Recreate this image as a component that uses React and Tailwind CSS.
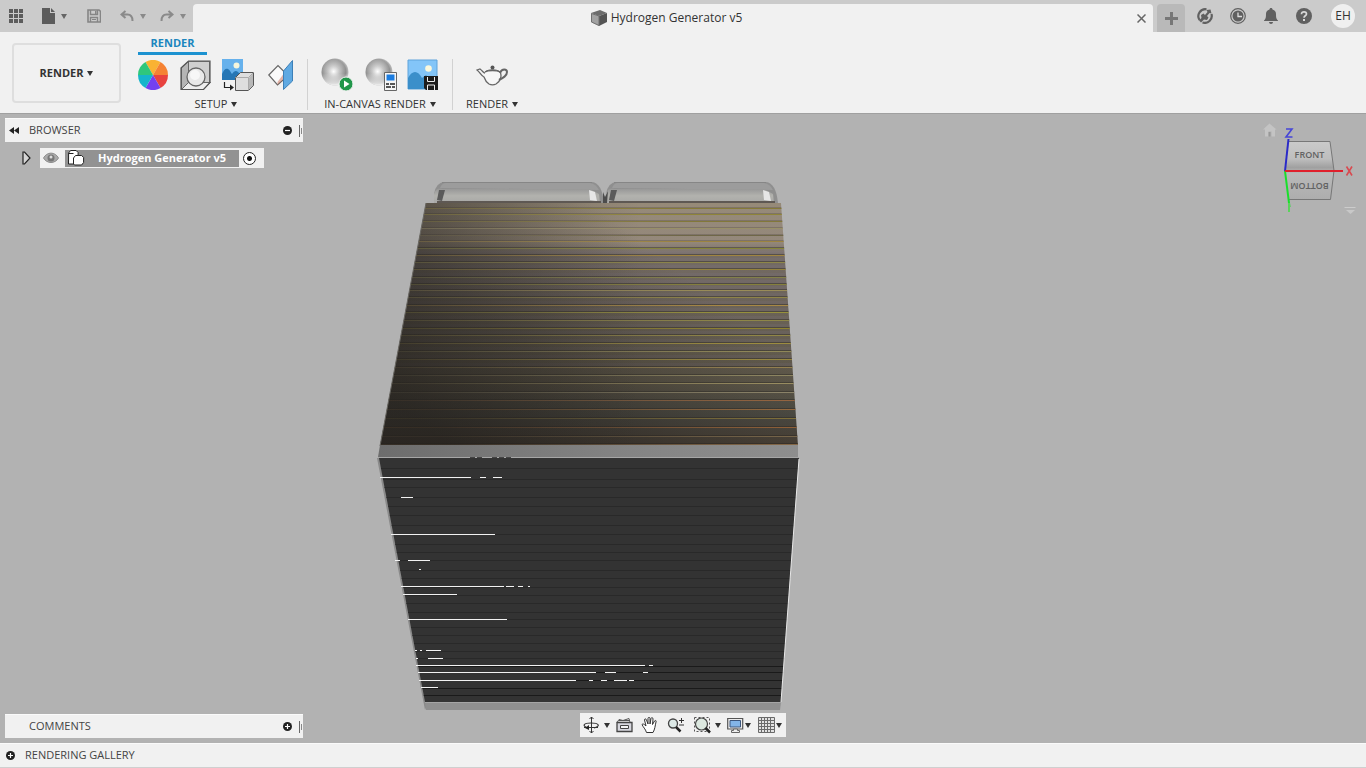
import { useState } from 'react';

const TOP_GROOVES = [
  [208, '#857a38'], [214, '#8e8438'], [221, '#82783a'], [228, '#989068'], [235, '#6f6748'],
  [241, '#9c8440'], [248, '#85853a'], [255, '#a08440'], [262, '#8e8748'], [269, '#94823c'],
  [277, '#82804a'], [284, '#85803c'], [290, '#998c58'], [297, '#8e8448'], [305, '#a88844'],
  [312, '#96903c'], [320, '#8e8648'], [328, '#8f8230'], [335, '#918646'], [343, '#9c8c40'],
  [351, '#8f8758'], [359, '#968640'], [367, '#937f50'], [375, '#8c8460'], [383, '#988c60'],
  [392, '#8a8268'], [400, '#946440'], [409, '#94683e'], [418, '#80703a'], [427, '#906038'],
  [436, '#78664a'], [444, '#886a48'],
];

const FRONT_GROOVES = [
  468, 479, 487, 497, 506, 515, 525, 534, 544, 552, 560, 570, 578, 587, 595, 603, 612, 619, 627, 635, 643, 651, 658,
  666, 672, 680, 688, 695,
];

// x1, x2, y
const GLINTS = [
  [380, 471, 477], [480, 486, 477], [493, 502, 477], [401, 413, 497], [391, 495, 534],
  [395, 400, 560], [408, 430, 560], [419, 421, 569], [401, 504, 586], [506, 514, 586], [518, 523, 586],
  [528, 530, 586], [403, 457, 594], [408, 507, 619], [415, 417, 650], [420, 422, 650], [426, 441, 650],
  [416, 418, 658], [428, 443, 658], [416, 645, 665], [649, 653, 665], [418, 596, 672], [605, 616, 672],
  [643, 648, 672], [419, 576, 680], [589, 593, 680], [601, 607, 680], [614, 627, 680], [629, 634, 680],
  [421, 438, 687],
];

const Caret = ({ className = 'text-[#333]' }) => (
  <svg width="6" height="5" viewBox="0 0 6 5" fill="currentColor" className={className} aria-hidden="true">
    <path d="M0 0h6L3 5z" />
  </svg>
);

const Icon = ({ w, h, children, className }) => (
  <svg width={w} height={h} viewBox={`0 0 ${w} ${h}`} fill="none" className={className} aria-hidden="true">
    {children}
  </svg>
);

const TopButton = ({ label, className = '', children }) => (
  <button type="button" aria-label={label} className={`flex h-8 items-center justify-center ${className}`}>
    {children}
  </button>
);

const PlusDot = ({ minus }) => (
  <Icon w={9} h={9}>
    <circle cx="4.5" cy="4.5" r="4.5" fill="#222" />
    <path d={minus ? 'M2 4.5h5' : 'M2 4.5h5M4.5 2v5'} stroke="#fff" strokeWidth="1.2" />
  </Icon>
);

const Grip = () => (
  <Icon w={4} h={12}>
    <path d="M0.5 0v12" stroke="#666" />
    <path d="M2.5 3v6" stroke="#888" />
  </Icon>
);

const TopBar = () => (
  <div className="flex h-8 bg-[#cbcbcb] text-[#5f5f5f]">
    <div className="flex w-[193px] shrink-0 items-center pl-2">
      <TopButton label="Data panel" className="w-4">
        <Icon w={14} h={14}>
          {[0, 5, 10].map((y) => [0, 5, 10].map((x) => (
            <rect key={`${x}-${y}`} x={x} y={y} width="4" height="4" fill="#5c5c5c" />
          )))}
        </Icon>
      </TopButton>
      <TopButton label="File" className="ml-4 w-7 gap-1.5">
        <Icon w={14} h={16}>
          <path d="M1 0h8v5h5v11H1z" fill="#5c5c5c" />
          <path d="M10 0l4 4h-4z" fill="#5c5c5c" />
        </Icon>
        <Caret className="text-[#666]" />
      </TopButton>
      <TopButton label="Save" className="ml-[18px] w-4">
        <Icon w={14} h={14}>
          <path d="M1 1h11l1.500 1.500V13H1z" stroke="#858585" strokeWidth="1.600" />
          <path d="M3.500 1v4.500h7V1M3.500 13V8.500h7V13" stroke="#858585" strokeWidth="1.400" />
          <path d="M8 2h1.500v3H8zM5 10h4v1H5z" fill="#858585" />
        </Icon>
      </TopButton>
      <TopButton label="Undo" className="ml-[18px] w-[26px] gap-1.5">
        <Icon w={14} h={14}>
          <path d="M5.500 2L1.500 5.500l4 3.500M1.500 5.500h6c3.500 0 5 2 5 6.500" stroke="#8a8a8a" strokeWidth="2" />
        </Icon>
        <Caret className="text-[#8a8a8a]" />
      </TopButton>
      <TopButton label="Redo" className="ml-3.5 w-[26px] gap-1.5">
        <Icon w={14} h={14}>
          <path d="M8.500 2l4 3.500-4 3.500M12.500 5.500h-6c-3.500 0-5 2-5 6.500" stroke="#8a8a8a" strokeWidth="2" />
        </Icon>
        <Caret className="text-[#8a8a8a]" />
      </TopButton>
    </div>

    <div className="mt-1 flex flex-1 items-center rounded-t-sm bg-[#f1f1f1] pr-1">
      <div className="flex flex-1 items-center justify-center gap-1 pl-1.5 text-[12px] text-[#333]">
        <Icon w={16} h={16}>
          <path d="M0 3L9 0l7 3-8 3z" fill="#6c6c6c" />
          <path d="M0 3l8 3v10l-8-4z" fill="#a2a2a2" />
          <path d="M8 6l8-3v9l-8 4z" fill="#545454" />
          <path d="M0.500 3.500L8 6v9.500L0.500 12z" stroke="#707070" />
        </Icon>
        <h1>Hydrogen Generator v5</h1>
      </div>
      <button type="button" aria-label="Close tab" className="p-[3px]">
        <Icon w={9} h={9}>
          <path d="M0.500 0.500l8 8M8.500 0.500l-8 8" stroke="#666" strokeWidth="1.500" />
        </Icon>
      </button>
    </div>

    <button type="button" aria-label="New design" className="mt-1 ml-1 flex w-7 items-center justify-center rounded-t-sm bg-[#b9b9b9]">
      <Icon w={13} h={13}>
        <path d="M0 6.500h13M6.500 0v13" stroke="#777" strokeWidth="3" />
      </Icon>
    </button>

    <div className="flex w-[181px] shrink-0 items-center pl-[3px]">
      <TopButton label="Extensions" className="w-[33px]">
        <Icon w={16} h={16}>
          <path d="M9.500 1.300A7 7 0 0 0 2.500 12M5.500 14.500A7 7 0 0 0 14.500 6" stroke="#606060" strokeWidth="2.200" />
          <path d="M2 12.500l2.500-2.500L4 7l2.500-1.500L8 7l2.500-3L9.500 2l4-.5 1 4-2-.5L10 8l1.500 1.500L10 12l-3-.5-3 3z" fill="#606060" />
        </Icon>
      </TopButton>
      <TopButton label="Job status" className="w-[33px]">
        <Icon w={16} h={16}>
          <circle cx="8" cy="8" r="7.300" stroke="#606060" strokeWidth="1.200" />
          <circle cx="8" cy="8" r="5.500" fill="#606060" />
          <path d="M8 4.500V8.500h4" stroke="#ddd" strokeWidth="1.300" />
        </Icon>
      </TopButton>
      <TopButton label="Notifications" className="w-[33px]">
        <Icon w={14} h={16}>
          <path d="M7 0c1 0 1.500.6 1.500 1.500C11 2 12 4 12 6c0 4 .5 5 2 6.500V13H0v-.5C1.500 11 2 10 2 6c0-2 1-4 3.500-4.500C5.500.6 6 0 7 0zM5 14h4c0 1.200-1 2-2 2s-2-.8-2-2z" fill="#606060" />
        </Icon>
      </TopButton>
      <TopButton label="Help" className="w-[33px]">
        <Icon w={16} h={16}>
          <circle cx="8" cy="8" r="8" fill="#606060" />
          <path d="M5.500 6.300C5.500 4.500 6.500 3.800 8 3.800s2.500.8 2.500 2.200c0 1.800-2.500 1.800-2.500 3.700" stroke="#d8d8d8" strokeWidth="1.700" />
          <path d="M7 11h2v2H7z" fill="#d8d8d8" />
        </Icon>
      </TopButton>
      <button type="button" aria-label="Account EH" className="ml-[11px] size-6 rounded-full bg-[#efefef] text-[12px] leading-6 text-[#333]">
        EH
      </button>
    </div>
  </div>
);

const ToolGroup = ({ label, children }) => (
  <div className="flex flex-col items-center">
    <div className="flex h-9 items-center">{children}</div>
    <button type="button" className="mt-[3px] flex items-center gap-1 text-[11px] leading-4 text-[#333]">
      {label}
      <Caret />
    </button>
  </div>
);

const Tool = ({ label, className = '', children }) => (
  <button type="button" aria-label={label} className={className}>
    {children}
  </button>
);

const Separator = () => <div className="mx-[13px] mt-0.5 h-[51px] w-px bg-[#d2d2d2]" />;

const Sphere = () => (
  <>
    <defs>
      <radialGradient id="sphere" cx="0.450" cy="0.480" r="0.600">
        <stop offset="0" stopColor="#fff" />
        <stop offset="0.350" stopColor="#c4c4c4" />
        <stop offset="0.750" stopColor="#8b8b8b" />
        <stop offset="1" stopColor="#d5d5d5" />
      </radialGradient>
      <linearGradient id="shine" x1="0" y1="0" x2="0" y2="1">
        <stop offset="0" stopColor="#fff" stopOpacity="0.200" />
        <stop offset="0.550" stopColor="#fff" stopOpacity="0" />
        <stop offset="1" stopColor="#fff" stopOpacity="0.850" />
      </linearGradient>
    </defs>
    <circle cx="14" cy="14" r="13.500" fill="url(#sphere)" />
    <circle cx="14" cy="14" r="13.500" fill="url(#shine)" />
  </>
);

const Toolbar = () => (
  <div className="flex h-[82px] border-b border-[#a0a0a0] bg-[#f1f1f1] pl-3">
    <button
      type="button"
      className="mt-[11px] flex h-[60px] w-[109px] items-center justify-center gap-1 rounded border-2 border-[#dedede] text-[11px] font-bold text-[#333]"
    >
      RENDER
      <Caret />
    </button>
    <div className="ml-[17px]">
      <button type="button" className="block h-[23px] w-[69px] border-b-[3px] border-[#1c92d0] text-[11px] leading-[22px] font-bold text-[#1c86be]">
        RENDER
      </button>
      <div className="mt-0.5 flex">
        <ToolGroup label="SETUP">
          <Tool label="Appearance">
            <Icon w={30} h={30}>
              <path d="M15 15L7.500 2A15 15 0 0 1 22.500 2z" fill="#f9b233" />
              <path d="M15 15L22.500 2A15 15 0 0 1 30 15z" fill="#f58233" />
              <path d="M15 15H30A15 15 0 0 1 22.500 28z" fill="#e8423f" />
              <path d="M15 15L22.500 28A15 15 0 0 1 7.500 28z" fill="#7440f0" />
              <path d="M15 15L7.500 28A15 15 0 0 1 0 15z" fill="#16b5cb" />
              <path d="M15 15H0A15 15 0 0 1 7.500 2z" fill="#2fc77b" />
            </Icon>
          </Tool>
          <Tool label="Scene settings" className="ml-3">
            <Icon w={32} h={30}>
              <path d="M8.500 1.500h21v21h-21z" fill="#cfcfcf" stroke="#777" />
              <path d="M1.500 7.500l7-6v21l-7 7z" fill="#b5b5b5" stroke="#666" />
              <path d="M1.500 29.500l7-7h22l-7 7z" fill="#eee" stroke="#666" />
              <path d="M1 8l7.500-7H30v21.500L23.500 29.500H1z" stroke="#555" strokeWidth="1.200" />
              <circle cx="16" cy="17" r="9" fill="#e9e9e9" stroke="#666" strokeWidth="1.300" />
              <circle cx="15" cy="15" r="5" fill="#f7f7f7" />
            </Icon>
          </Tool>
          <Tool label="Decal" className="ml-2.5">
            <Icon w={32} h={34}>
              <path d="M0 1h21v21H0z" fill="#66b1ec" />
              <path d="M0 16c2-5 4-6 6-5 2 1 3 4 4 5 2-3 4-4 6-2l5 5v3H0z" fill="#2576b5" />
              <circle cx="14.500" cy="7.500" r="3" fill="#f6f6dc" />
              <path d="M13.500 19.500l5-5h13v13l-5 5h-13z" fill="#dedede" stroke="#555" />
              <path d="M13.500 19.500h13v13M26.500 19.500l5-5" stroke="#aaa" />
              <path d="M27 20l4-4.500v12l-4 4z" fill="#b8b8b8" />
              <path d="M2.500 24v5.500H11" stroke="#222" strokeWidth="1.200" />
              <path d="M8 26.500l4 3-4 3z" fill="#222" />
            </Icon>
          </Tool>
          <Tool label="Texture map controls" className="ml-3.5">
            <Icon w={26} h={30}>
              <path d="M0.800 15L10 5.500l8 8v4L9.500 25z" fill="#fafafa" stroke="#666" strokeWidth="1.200" />
              <path d="M9.500 25l6-6v-5l-6 8z" fill="#c96d55" opacity="0.500" />
              <path d="M15.500 11L24.500 0.500v20.500l-9 8.500z" fill="#5fa9e2" stroke="#3d80b8" />
            </Icon>
          </Tool>
        </ToolGroup>
        <Separator />
        <ToolGroup label="IN-CANVAS RENDER">
          <Tool label="In-canvas render">
            <Icon w={32} h={34}>
              <Sphere />
              <circle cx="25" cy="26" r="7" fill="#21964a" stroke="#f1f1f1" />
              <path d="M23 22.500l5.500 3.500-5.500 3.500z" fill="#fff" />
            </Icon>
          </Tool>
          <Tool label="In-canvas render settings" className="ml-3">
            <Icon w={32} h={34}>
              <Sphere />
              <path d="M19.500 14.500h12v18h-12z" fill="#f5f5f5" stroke="#666" />
              <path d="M21.500 16.500h8v6h-8z" fill="#1b7ce0" />
              <path d="M21 26h3M25 26h5M21 29h5M27 29h3" stroke="#222" strokeWidth="1.400" />
            </Icon>
          </Tool>
          <Tool label="Capture image" className="ml-2.5">
            <Icon w={32} h={32}>
              <path d="M1 1h29v29H1z" fill="#83c5f8" />
              <path d="M1 1h29v29H1z" stroke="#5fa3da" />
              <path d="M1 19c4-8 10-8 14 0l4-3 4 4v10H1z" fill="#3b8fca" />
              <circle cx="21.500" cy="9.500" r="3.300" fill="#faf8dd" />
              <path d="M17 17h14v14H19l-2-2z" fill="#1d1d1d" />
              <path d="M20.500 18v4.500h7V18M20.500 31v-5h7v5" stroke="#eee" />
            </Icon>
          </Tool>
        </ToolGroup>
        <Separator />
        <ToolGroup label="RENDER">
          <Tool label="Render">
            <Icon w={32} h={24}>
              <path d="M9 9c3-2 12-2 15 0 2 3 1 9-4 12-2 1-5 1-7 0-3-2-4-4-5-7C5 13 4 9 1 7l3-1c3 2 3 4 5 4" fill="#f7f7f7" stroke="#666" strokeWidth="1.300" />
              <path d="M9 9c3-3 12-3 15 0" stroke="#666" />
              <path d="M24 10c2-5 7-4 7-1 0 4-4 6-8 8" stroke="#666" strokeWidth="2" />
              <circle cx="16.500" cy="4.500" r="2" fill="#555" />
            </Icon>
          </Tool>
        </ToolGroup>
      </div>
    </div>
  </div>
);

const PanelHeader = ({ title, open, onToggle, collapse }) => (
  <div className="flex h-6 w-[298px] items-center border-t border-[#fafafa] bg-[#f1f1f1] pl-1 text-[11px] text-[#444]">
    <div className="w-5">
      {collapse ? (
        <button type="button" aria-label="Collapse panel" className="flex">
          <Icon w={10} h={7}>
            <path d="M5 0v7L0 3.500zM10 0v7L5 3.500z" fill="#222" />
          </Icon>
        </button>
      ) : null}
    </div>
    <h2 className="flex-1">{title}</h2>
    <button type="button" aria-label={`Toggle ${title}`} onClick={onToggle} className="mr-[7px]">
      <PlusDot minus={open} />
    </button>
    <Grip />
  </div>
);

const Browser = () => {
  const [open, setOpen] = useState(true);

  return (
    <section>
      <PanelHeader title="BROWSER" open={open} onToggle={() => setOpen(!open)} collapse />
      {open ? (
        <div className="mt-1.5 flex h-5 items-center pl-[17px]">
          <button type="button" aria-label="Expand component" className="w-[18px]">
            <Icon w={9} h={14}>
              <path d="M1 1h1.500l5.500 6-5.500 6H1z" fill="#d5d5d5" stroke="#222" strokeWidth="1.200" />
            </Icon>
          </button>
          <div className="flex h-5 w-56 items-center bg-[#f1f1f1] pl-[3px]">
            <button type="button" aria-label="Show or hide">
              <Icon w={16} h={12}>
                <path d="M0.500 6C4-0.500 12-0.500 15.500 6 12 12 4 12 0.500 6z" fill="#aaa" stroke="#8c8c8c" />
                <circle cx="8" cy="6" r="3.500" fill="#777" />
                <circle cx="8" cy="5" r="1.500" fill="#ddd" />
              </Icon>
            </button>
            <div className="ml-1.5 flex h-[17px] flex-1 items-center bg-[#929292] pl-[3px]">
              <Icon w={17} h={16}>
                <path d="M0.600 3l2-2.500h5.500l2 2v3h3.500l2 2v5l-2 2.500H6.500l-1-1h-5z" fill="#fff" stroke="#222" />
                <path d="M5.500 14V8l2-2.500H10M1 3.500h4.500" stroke="#222" />
              </Icon>
              <span className="ml-[13px] text-[11px] font-bold whitespace-nowrap text-white">Hydrogen Generator v5</span>
            </div>
            <label className="flex w-[25px] justify-center pr-1">
              <input
                type="radio"
                name="active"
                defaultChecked
                aria-label="Activate component"
                className="size-[13px] appearance-none rounded-full border border-[#222] bg-[radial-gradient(circle,#111_0_2px,#fff_3px)]"
              />
            </label>
          </div>
        </div>
      ) : null}
    </section>
  );
};

const ViewCube = () => (
  <svg width="100" height="100" viewBox="1260 118 100 100" fill="none" className="mr-px shrink-0" role="img" aria-label="View cube">
    <defs>
      <linearGradient id="cube" x1="0" y1="0" x2="0" y2="1">
        <stop offset="0" stopColor="#cacaca" />
        <stop offset="0.300" stopColor="#bebebe" />
        <stop offset="0.450" stopColor="#a0a0a0" />
        <stop offset="0.550" stopColor="#b9b9b9" />
        <stop offset="1" stopColor="#adadad" />
      </linearGradient>
    </defs>
    <path d="M1263 129.500l6.500-6 7 6h-1.500v7h-3.500v-5h-3v5h-3.500v-7z" fill="#c4c4c4" />
    <path d="M1268.500 132h2v4.500h-2z" fill="#989898" />
    <path d="M1289 141.500h41l4 29-3.500 29H1289l-4-28z" fill="url(#cube)" />
    <path d="M1289 141.500h41l4 29-3.500 29H1289" stroke="#777" />
    <text x="1309.500" y="158" textAnchor="middle" fontSize="9" fontWeight="600" fill="#626262">FRONT</text>
    <text x="1309.500" y="189" textAnchor="middle" fontSize="9" fontWeight="600" fill="#626262" transform="rotate(180 1309.500 186)">BOTTOM</text>
    <path d="M1288.500 139l-3.500 32" stroke="#2a2ac8" strokeWidth="2" />
    <path d="M1285 171l4.500 36" stroke="#18e02a" strokeWidth="2" />
    <path d="M1289 203v9" stroke="#5ad35a" strokeWidth="2" />
    <path d="M1285 171h58" stroke="#e0202c" strokeWidth="2" />
    <path d="M1286 129h6l-6 8h6.500" stroke="#4646d8" strokeWidth="1.600" />
    <path d="M1346.500 166.500l5.500 9M1352 166.500l-5.500 9" stroke="#d84a50" strokeWidth="1.600" />
    <path d="M1344.500 207.500h11" stroke="#ccc" />
    <path d="M1346 210h9l-4.500 4z" fill="#c8c8c8" />
  </svg>
);

// rounded tank seen above the back edge of the stack
const Tank = ({ x, w }) => (
  <g transform={`translate(${x} 0)`}>
    <path d={`M0 203V194Q2 182 11 182H${w - 12}Q${w - 2} 183 ${w} 203z`} fill="#8f8f8f" />
    <path d={`M6 188Q8 183 12 183H${w - 14}Q${w - 8} 184 ${w - 5} 190z`} fill="#9c9c9c" />
    <path d={`M0 201V194Q2 187 9 189H${w - 14}L${w - 5} 194 ${w - 4} 203H0z`} fill="url(#tank)" />
    <path d="M3 200l2-10h6l-3 11z" fill="#5a5a5a" />
    <path d={`M${w - 15} 190l6 2 2 9-7-1z`} fill="#e6e6e6" />
    <path d={`M3 202h${w - 6}`} stroke="#5e5853" strokeWidth="2" />
    <path d={`M8 182.500h${w - 20}`} stroke="#868686" />
  </g>
);

const Model = () => (
  <svg
    width="440"
    height="540"
    viewBox="370 175 440 540"
    fill="none"
    className="absolute top-[61px] left-[370px]"
    role="img"
    aria-label="Hydrogen Generator model"
  >
    <defs>
      <linearGradient id="tank" x1="0" y1="0" x2="0" y2="1">
        <stop offset="0" stopColor="#969696" />
        <stop offset="0.500" stopColor="#b2b2ae" />
        <stop offset="1" stopColor="#a8a8a6" />
      </linearGradient>
      <linearGradient id="topFace" gradientUnits="userSpaceOnUse" x1="0" y1="203" x2="0" y2="445">
        <stop offset="0" stopColor="#968a78" />
        <stop offset="0.160" stopColor="#94887b" />
        <stop offset="0.220" stopColor="#746b64" />
        <stop offset="0.500" stopColor="#686054" />
        <stop offset="0.750" stopColor="#5c5648" />
        <stop offset="0.880" stopColor="#4c4b44" />
        <stop offset="1" stopColor="#4c4237" />
      </linearGradient>
      <linearGradient id="topShade" gradientUnits="userSpaceOnUse" x1="430" y1="430" x2="600" y2="210">
        <stop offset="0" stopColor="#1e1b19" stopOpacity="0.720" />
        <stop offset="0.450" stopColor="#24211e" stopOpacity="0.420" />
        <stop offset="1" stopColor="#302c24" stopOpacity="0" />
      </linearGradient>
      <linearGradient id="sideShade" gradientUnits="userSpaceOnUse" x1="400" y1="0" x2="640" y2="0">
        <stop offset="0" stopColor="#2a2722" stopOpacity="0.420" />
        <stop offset="1" stopColor="#2a2722" stopOpacity="0" />
      </linearGradient>
      <linearGradient id="grooveFade" gradientUnits="userSpaceOnUse" x1="400" y1="360" x2="660" y2="200">
        <stop offset="0" stopColor="#fff" stopOpacity="0.120" />
        <stop offset="0.450" stopColor="#fff" stopOpacity="0.450" />
        <stop offset="1" stopColor="#fff" />
      </linearGradient>
      <mask id="grooves" maskUnits="userSpaceOnUse" x="370" y="175" width="440" height="290">
        <path d="M370 175h440v290H370z" fill="url(#grooveFade)" />
      </mask>
      <clipPath id="topClip">
        <path d="M426 203H781L798 446H380z" />
      </clipPath>
      <clipPath id="frontClip">
        <path d="M379 458H799L781 702H425z" />
      </clipPath>
      <linearGradient id="lip" x1="0" y1="0" x2="1" y2="0">
        <stop offset="0" stopColor="#6d6d6d" />
        <stop offset="0.600" stopColor="#848484" />
        <stop offset="1" stopColor="#8e8e8e" />
      </linearGradient>
    </defs>

    <Tank x={434} w={170} />
    <Tank x={606} w={172} />
    <path d="M603 203v-11l2 5 3-6-1 12z" fill="#4c4c4c" />

    <g clipPath="url(#topClip)">
      <path d="M370 200h440v250H370z" fill="url(#topFace)" />
      <g shapeRendering="crispEdges">
        {TOP_GROOVES.map(([y]) => (
          <path key={y} d={`M370 ${y - 1}.5h440`} stroke="#221f1c" strokeOpacity={y < 245 ? '0.200' : '0.380'} />
        ))}
        {TOP_GROOVES.filter(([y]) => y > 250 && y < 370).map(([y]) => (
          <path key={y} d={`M370 ${y - 3}.5h440`} stroke="#8a7db0" strokeOpacity="0.100" strokeWidth="3" />
        ))}
      </g>
      <path d="M370 200h440v250H370z" fill="url(#topShade)" />
      <path d="M370 200h440v250H370z" fill="url(#sideShade)" />
      <g shapeRendering="crispEdges" mask="url(#grooves)">
        {TOP_GROOVES.map(([y, color]) => (
          <path key={y} d={`M370 ${y}.5h440`} stroke={color} />
        ))}
      </g>
    </g>
    <path d="M426 203L380 446" stroke="#6a6863" />

    <path d="M380 445H798V457H378z" fill="url(#lip)" />
    <path d="M378 457.500H799" stroke="#a6a6a6" />
    <path d="M377 458h4l47 244-3 8z" fill="#8a8a8a" />
    <g clipPath="url(#frontClip)" shapeRendering="crispEdges">
      <path d="M370 458h440v250H370z" fill="#333" />
      {FRONT_GROOVES.map((y) => (
        <path key={y} d={`M370 ${y}.5h440`} stroke={y > 660 ? '#1a1a1a' : '#292929'} />
      ))}
    </g>
    <path d="M799 459L781 702" stroke="#e8e8e8" />
    <path d="M425 702H781L780 710H426z" fill="#8f8f8f" />
    <path d="M425 702.500H781" stroke="#a5a5a5" />
    <path d="M470 457.500h14M492 457.500h20" stroke="#444" strokeDasharray="5 2" />
    <g shapeRendering="crispEdges" stroke="#f2f2f2">
      {GLINTS.map(([x1, x2, y]) => (
        <path key={`${x1}-${y}`} d={`M${x1} ${y}.5H${x2}`} />
      ))}
    </g>
  </svg>
);

const NavBar = () => (
  <div className="mb-px flex h-6 w-[206px] items-center bg-[#f1f1f1] pl-[3px]">
    <button type="button" aria-label="Orbit" className="flex items-center gap-1">
      <Icon w={17} h={18}>
        <path d="M8.500 1v16M6.500 3l2-2 2 2M6.500 15l2 2 2-2" stroke="#333" />
        <path d="M5 12C-1 10 0 7 8 7s10 3 3 5M1 11.500h14" stroke="#333" strokeWidth="1.200" />
        <path d="M6 9l-4 3 4 2z" fill="#222" />
      </Icon>
      <Caret />
    </button>
    <button type="button" aria-label="Look at" className="ml-1.5">
      <Icon w={17} h={16}>
        <path d="M1 5.500h15v9H1z" fill="#d8d8df" stroke="#444" strokeWidth="1.300" />
        <path d="M1 5.500l2-3 4 1 6-2 1 4M3 3.500h11" stroke="#555" />
        <path d="M4.500 8.500h8v3h-8z" fill="#f4f4f4" stroke="#444" />
      </Icon>
    </button>
    <button type="button" aria-label="Pan" className="ml-2">
      <Icon w={17} h={18}>
        <path d="M5.500 16.500C4.500 13 2 11 1 8.500c1-1 2-.5 4 1.500L3.500 4c0-1.500 1.500-1.500 2 0L7 8V2.500c0-1.500 2-1.500 2 0V8l1-5.500c.5-1.500 2-1 2 .5L11.500 8.500 13.500 5c1-1 2-.5 1.500 1-1 4-1 7-3 10.500z" fill="#fff" stroke="#333" />
      </Icon>
    </button>
    <button type="button" aria-label="Zoom" className="ml-[9px]">
      <Icon w={18} h={18}>
        <circle cx="6" cy="7.500" r="4.500" fill="#dce8e6" stroke="#444" strokeWidth="1.300" />
        <path d="M9 11l4.500 4.500" stroke="#222" strokeWidth="2.500" />
        <path d="M12 4.500h5M14.500 2v5M12 9h5" stroke="#333" />
      </Icon>
    </button>
    <button type="button" aria-label="Fit" className="ml-[9px] flex items-center gap-1">
      <Icon w={17} h={18}>
        <path d="M0.500 1.500h15v14H0.500z" stroke="#555" strokeDasharray="2 2" />
        <circle cx="7.500" cy="8" r="6" fill="#dce8e0" stroke="#444" strokeWidth="1.200" />
        <path d="M11.500 12l4.500 4.500" stroke="#222" strokeWidth="2.500" />
      </Icon>
      <Caret />
    </button>
    <button type="button" aria-label="Display settings" className="ml-1.5 flex items-center gap-px">
      <Icon w={17} h={16}>
        <path d="M0.700 1.500h15v10.500h-15z" fill="#eee" stroke="#555" strokeWidth="1.200" />
        <path d="M3 3.500h10.500v6.500H3z" fill="#83b5e8" stroke="#3c567c" />
        <path d="M6.500 12h4v1.500h2v2H4.500v-2h2z" fill="#eee" stroke="#666" />
      </Icon>
      <Caret />
    </button>
    <button type="button" aria-label="Grid settings" className="ml-[7px] flex items-center gap-px">
      <Icon w={17} h={17}>
        <path d="M0.500 0.500h16v15H0.500zM0.500 3.500h16M0.500 6.500h16M0.500 9.500h16M0.500 12.500h16M3.500 0.500v15M6.500 0.500v15M9.500 0.500v15M12.500 0.500v15" fill="#e2e2e2" stroke="#6a6a6a" />
      </Icon>
      <Caret />
    </button>
  </div>
);

const App = () => {
  const [commentsOpen, setCommentsOpen] = useState(false);

  return (
    <div className="flex min-h-screen flex-col font-['Open_Sans',sans-serif]">
      <header>
        <TopBar />
        <Toolbar />
      </header>

      <main className="relative flex flex-1 flex-col justify-between overflow-hidden bg-[#b2b2b2] px-[5px] pt-1 pb-[5px]">
        <Model />
        <div className="relative flex items-start justify-between">
          <Browser />
          <ViewCube />
        </div>
        <div className="relative grid grid-cols-[1fr_auto_1fr] items-end">
          <PanelHeader title="COMMENTS" open={commentsOpen} onToggle={() => setCommentsOpen(!commentsOpen)} />
          <NavBar />
        </div>
      </main>

      <footer className="flex h-[25px] items-center gap-2.5 border-t border-b border-t-[#fafafa] border-b-[#cfcfcf] bg-[#f1f1f1] pl-1.5 text-[11px] text-[#444]">
        <button type="button" aria-label="Open gallery">
          <PlusDot />
        </button>
        <h2>RENDERING GALLERY</h2>
      </footer>
    </div>
  );
};

export default App;
